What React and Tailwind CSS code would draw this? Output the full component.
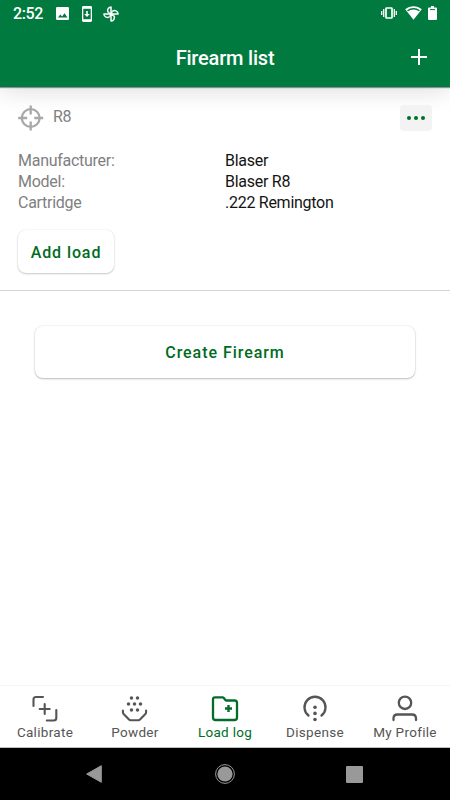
const details = [
  { label: "Manufacturer:", value: "Blaser" },
  { label: "Model:", value: "Blaser R8" },
  { label: "Cartridge", value: ".222 Remington" },
];

const tabs = [
  { label: "Calibrate", icon: CalibrateIcon },
  { label: "Powder", icon: PowderIcon },
  { label: "Load log", icon: LoadLogIcon, active: true },
  { label: "Dispense", icon: DispenseIcon },
  { label: "My Profile", icon: ProfileIcon },
];

export default function App() {
  return (
    <div className="flex h-[800px] w-[450px] flex-col overflow-hidden bg-white font-['Roboto',sans-serif]">
      <header className="h-[87px] shrink-0 bg-[#007a3e] text-white shadow-[0_1px_1px_rgba(0,0,0,0.4),0_5px_22px_rgba(0,0,0,0.12)]">
        <StatusBar />
        <div className="grid h-[60px] grid-cols-[60px_1fr_60px] items-center">
          <span />
          <h1 className="pt-px text-center text-xl leading-6 font-medium tracking-[-0.2px]">Firearm list</h1>
          <button className="flex justify-center pr-[2px]">
            <svg width="16" height="16" viewBox="0 0 16 16" stroke="currentColor" strokeWidth="2">
              <path d="M8 0v16M0 8h16" />
            </svg>
          </button>
        </div>
      </header>

      <main className="flex-1">
        <section className="h-[204px] border-b border-[#d4d4d4] px-[18px] pt-[18px]">
          <div className="flex h-[26px] items-center">
            <CrosshairIcon />
            <h2 className="ml-[9px] flex-1 pb-[3px] text-base leading-5 tracking-[-0.3px] text-[#808080]">R8</h2>
            <button className="flex h-[26px] w-8 items-center justify-center gap-[3px] rounded bg-[#f3f3f3]">
              <span className="size-1 rounded-full bg-[#006e2a]" />
              <span className="size-1 rounded-full bg-[#006e2a]" />
              <span className="size-1 rounded-full bg-[#006e2a]" />
            </button>
          </div>

          <dl className="mt-[19px] h-16">
            {details.map((item) => (
              <div key={item.label} className="grid h-[21px] grid-cols-[207px_1fr] text-base leading-[21px] tracking-[-0.27px]">
                <dt className="text-[#808080]">{item.label}</dt>
                <dd className="text-[#141414]">{item.value}</dd>
              </div>
            ))}
          </dl>

          <button className="mt-4 h-[43px] w-24 rounded-lg bg-white pt-[3px] text-base font-medium tracking-[0.9px] text-[#006c22] shadow-[0_1px_2px_rgba(0,0,0,0.2),0_0_2px_rgba(0,0,0,0.1)]">
            Add load
          </button>
        </section>

        <div className="px-[35px] pt-[35px]">
          <button className="h-[52px] w-full rounded-lg bg-white pt-[2px] text-base font-medium tracking-[0.95px] text-[#006c22] shadow-[0_1px_2px_rgba(0,0,0,0.24),0_0_2px_rgba(0,0,0,0.12)]">
            Create Firearm
          </button>
        </div>
      </main>

      <nav className="grid h-[63px] shrink-0 grid-cols-5 border-t border-b border-t-[#f5f5f5] border-b-[#bdbdbd]">
        {tabs.map((tab) => (
          <TabItem key={tab.label} {...tab} />
        ))}
      </nav>

      <SystemBar />
    </div>
  );
}

function StatusBar() {
  return (
    <div className="flex h-[27px] items-center justify-between pr-[13px] pl-[13px]">
      <div className="flex items-center">
        <span className="w-[43px] text-base leading-5 font-medium tracking-[-0.4px]">2:52</span>
        <svg width="13" height="13" viewBox="0 0 13 13">
          <rect width="13" height="13" rx="1.3" fill="currentColor" />
          <path d="M2 10.5l2.3-3.1 1.8 2.1 2.4-3.2 2.9 4.2z" fill="#007a3e" />
        </svg>
        <svg width="10" height="16" viewBox="0 0 10 16" className="ml-[13px]">
          <rect width="10" height="16" rx="1.4" fill="currentColor" />
          <path d="M1.3 2.8h7.4v10.4H1.3z" fill="#007a3e" />
          <path d="M4.2 5h1.6v3h2L5 11 2.2 8h2z" fill="currentColor" />
        </svg>
        <svg width="16" height="16" viewBox="0 0 16 16" className="ml-[11px]" fill="none" stroke="currentColor" strokeWidth="1.5" strokeLinejoin="round">
          <path d="M8 8V.9A3.550 3.550 0 0 0 5.500 6.800" />
          <path d="M8 8h7.100A3.550 3.550 0 0 0 9.200 5.500" />
          <path d="M8 8v7.100A3.550 3.550 0 0 0 10.500 9.200" />
          <path d="M8 8H.9A3.550 3.550 0 0 0 6.800 10.500" />
          <path d="M5.500 6.800L8 8l1.200-2.500M10.500 9.200L8 8l-1.200 2.500" />
        </svg>
      </div>
      <div className="flex items-center pb-px">
        <svg width="16" height="12" viewBox="0 0 16 12">
          <rect x="5" y="1" width="6" height="10" rx="0.6" fill="none" stroke="currentColor" strokeWidth="1.7" />
          <path d="M2.700 2v8M13.300 2v8M.7 4v4M15.300 4v4" stroke="currentColor" strokeWidth="1.3" />
        </svg>
        <svg width="17" height="14" viewBox="0 0 17 14" className="ml-2">
          <path d="M8.500 13.700L.2 3.300C5-.9 12-.9 16.800 3.300z" fill="currentColor" />
          <path d="M2.500 4.700C6 2 11 2 14.500 4.700" fill="none" stroke="#007a3e" strokeWidth="1.4" />
        </svg>
        <svg width="9" height="14" viewBox="0 0 9 14" className="ml-[6px]">
          <path d="M3 0h3v1.500h2q1 0 1 1V13q0 1-1 1H1q-1 0-1-1V2.500q0-1 1-1h2z" fill="currentColor" />
          <path d="M2 3.600h5" stroke="#007a3e" />
        </svg>
      </div>
    </div>
  );
}

function TabItem({ label, icon: Icon, active }) {
  return (
    <button className={active ? "flex flex-col items-center pt-[9px] text-[#006e2a]" : "flex flex-col items-center pt-[9px] text-[#555]"}>
      <Icon />
      <span className="mt-px text-[13.5px] leading-4 tracking-[0.3px] whitespace-nowrap">{label}</span>
    </button>
  );
}

function SystemBar() {
  return (
    <div className="grid h-[52px] shrink-0 grid-cols-[188px_74px_188px] items-center bg-black text-[#999]">
      <svg width="16" height="18" viewBox="0 0 16 18" className="ml-[86px]">
        <path d="M15.300 .7v16.600L.7 9z" fill="currentColor" stroke="currentColor" strokeLinejoin="round" />
      </svg>
      <svg width="20" height="20" viewBox="0 0 20 20" className="mx-auto">
        <circle cx="10" cy="10" r="9.4" fill="none" stroke="currentColor" />
        <circle cx="10" cy="10" r="7.6" fill="currentColor" />
      </svg>
      <span className="ml-[84px] size-[17px] rounded-[1px] bg-[#999]" />
    </div>
  );
}

function CrosshairIcon() {
  return (
    <svg width="26" height="26" viewBox="0 0 26 26" fill="none" stroke="#a9a9a9" strokeWidth="2.3">
      <circle cx="12.7" cy="13" r="8.9" />
      <path d="M12.700 .5v9M12.700 16.500v9M.2 13h9M16.200 13h9" />
    </svg>
  );
}

function CalibrateIcon() {
  return (
    <svg width="28" height="28" viewBox="0 0 28 28" fill="none" stroke="currentColor" strokeWidth="2.1" strokeLinecap="round">
      <path d="M2.500 11V4.500Q2.500 2 5 2h7" />
      <path d="M25.300 15v8q0 2.500-2.500 2.500h-7" />
      <path d="M13.700 9v10M8.700 14h10" />
    </svg>
  );
}

function PowderIcon() {
  return (
    <svg width="28" height="28" viewBox="0 0 28 28" fill="currentColor">
      <circle cx="10.500" cy="2.900" r="1.750" />
      <circle cx="16.500" cy="2.900" r="1.750" />
      <circle cx="7.500" cy="8.900" r="1.750" />
      <circle cx="13.500" cy="8.900" r="1.750" />
      <circle cx="19.500" cy="8.900" r="1.750" />
      <circle cx="10.500" cy="14.900" r="1.750" />
      <circle cx="16.500" cy="14.900" r="1.750" />
      <path
        d="M1.900 15.500v1.800q0 .9.700 1.600l5.400 5.600q.7.700 1.600.7h7.800q.9 0 1.600-.7l5.400-5.600q.7-.7.700-1.600v-1.800"
        fill="none"
        stroke="currentColor"
        strokeWidth="2.1"
        strokeLinecap="round"
      />
    </svg>
  );
}

function LoadLogIcon() {
  return (
    <svg width="28" height="28" viewBox="0 0 28 28" fill="none" stroke="currentColor" strokeWidth="2.3" strokeLinejoin="round">
      <path d="M4 2.400h7.500q.8 0 1.300.6l1.600 1.900q.5.600 1.300.6H23.500q2.500 0 2.500 2.500v14.500q0 2.500-2.500 2.500H4.500Q2 25 2 22.500V4.400q0-2 2-2z" />
      <path d="M17.500 10v7M14 13.500h7" strokeWidth="2.4" />
    </svg>
  );
}

function DispenseIcon() {
  return (
    <svg width="28" height="28" viewBox="0 0 28 28" fill="currentColor">
      <path d="M7.500 20.500A10.500 10.500 0 1 1 20.500 20.500" fill="none" stroke="currentColor" strokeWidth="2.3" strokeLinecap="round" />
      <circle cx="14" cy="12.300" r="1.800" />
      <circle cx="14" cy="18.400" r="1.800" />
      <circle cx="14" cy="24.500" r="1.800" />
    </svg>
  );
}

function ProfileIcon() {
  return (
    <svg width="28" height="28" viewBox="0 0 28 28" fill="none" stroke="currentColor" strokeWidth="2.3" strokeLinecap="round">
      <circle cx="14" cy="7.800" r="6.200" />
      <path d="M2.500 25v-1.500q0-4 4-4h14.500q4 0 4 4V25" />
    </svg>
  );
}
